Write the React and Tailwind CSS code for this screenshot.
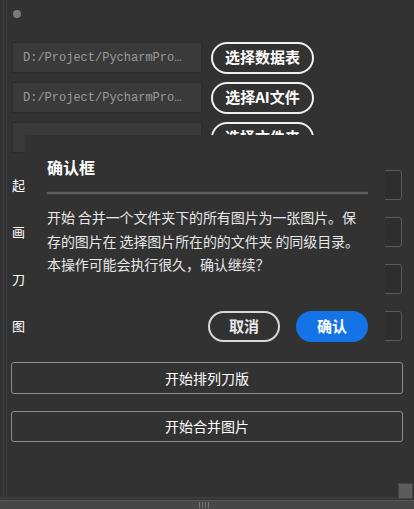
import React from "react";

const cjk = { fontFamily: '"Microsoft YaHei","Noto Sans CJK SC","Noto Sans",sans-serif' };
const mono = { fontFamily: '"Liberation Mono","DejaVu Sans Mono",monospace' };

function PathRow({ text, btn }) {
  return (
    <div className="flex items-center h-[31px] gap-[9px]">
      <div
        className="w-[190px] h-[31px] bg-[#3a3a3a] border border-[#2c2c2c] flex items-center pl-[10px] text-[12px] text-[#9a9a9a] overflow-hidden whitespace-nowrap"
        style={mono}
      >
        {text}
      </div>
      <div
        className="w-[103px] h-[32px] rounded-full border-2 border-[#f0f0f0] flex items-center justify-center text-[15px] font-bold text-white"
        style={cjk}
      >
        {btn}
      </div>
    </div>
  );
}

function LabelRow({ label }) {
  return (
    <div className="flex items-center h-[30px]">
      <div className="w-[28px] text-[13px] text-white" style={cjk}>{label}</div>
      <div className="flex-1 h-[30px] bg-[#2e2e2e] border border-[#5a5a5a] rounded-[3px] mr-[1px]" />
    </div>
  );
}

export default function App() {
  return (
    <div className="relative w-[414px] h-[509px] bg-[#323232] overflow-hidden" style={cjk}>
      <div className="absolute left-[3px] top-0 bottom-[10px] w-[1px] bg-[#3e3e3e]" />
      <div className="absolute left-[6px] top-0 bottom-[10px] w-[1px] bg-[#3a3a3a]" />
      <div className="pl-[12px] pr-[11px]">
        <div className="h-[42px] pt-[10px] pl-[1px]">
          <div className="w-[8px] h-[8px] rounded-full bg-[#7a7a7a] ml-[0px]" />
        </div>
        <div className="flex flex-col gap-[9px]">
          <PathRow text="D:/Project/PycharmPro…" btn="选择数据表" />
          <PathRow text="D:/Project/PycharmPro…" btn="选择AI文件" />
          <PathRow text="" btn="选择文件夹" />
        </div>
        <div className="flex flex-col gap-[17px] mt-[17px]">
          <LabelRow label="起" />
          <LabelRow label="画" />
          <LabelRow label="刀" />
          <LabelRow label="图" />
        </div>
        <div className="flex flex-col gap-[17px] mt-[21px] -ml-[1px]">
          <div className="h-[32px] border border-[#8c8c8c] rounded-[3px] flex items-center justify-center text-[14px] text-white">
            开始排列刀版
          </div>
          <div className="h-[31px] border border-[#8c8c8c] rounded-[3px] flex items-center justify-center text-[14px] text-white">
            开始合并图片
          </div>
        </div>
      </div>

      <div className="absolute left-0 right-[16px] bottom-[10px] h-[2px] bg-[#3c3c3c]" />
      <div className="absolute left-0 right-0 bottom-0 h-[9px] bg-[#474747] border-t border-[#5a5a5a] flex justify-center">
        <div className="w-[16px] h-[8px] mr-[0px] flex gap-[2px] items-center">
          <div className="w-[1px] h-[6px] bg-[#777]" />
          <div className="w-[1px] h-[6px] bg-[#777]" />
          <div className="w-[1px] h-[6px] bg-[#777]" />
          <div className="w-[1px] h-[6px] bg-[#777]" />
        </div>
      </div>
      <div className="absolute right-[1px] bottom-[10px] w-[15px] h-[16px] bg-[#5c5c5c] border border-[#444]" />

      {/* dialog */}
      <div className="absolute left-[25px] top-[135px] w-[360px] h-[223px] bg-[#323232] pl-[22px] pr-[17px] pt-[20px]">
        <div className="text-[16px] font-bold text-white leading-[24px]">确认框</div>
        <div className="mt-[11px] h-[6px] flex flex-col justify-center">
          <div className="h-[1px] bg-[#3c3c3c]" />
          <div className="h-[2px] bg-[#5e5e5e]" />
          <div className="h-[1px] bg-[#3c3c3c]" />
        </div>
        <div className="mt-[10px] text-[14px] leading-[23.5px] text-[#e8e8e8] tracking-[-0.1px]">
          开始&nbsp;合并一个文件夹下的所有图片为一张图片。保存的图片在&nbsp;选择图片所在的的文件夹&nbsp;的同级目录。本操作可能会执行很久，确认继续？
        </div>
        <div className="flex justify-end gap-[16px] mt-[34px]">
          <div className="w-[72px] h-[31px] rounded-full border-2 border-[#d8d8d8] flex items-center justify-center text-[15px] font-bold text-[#e8e8e8]">
            取消
          </div>
          <div className="w-[72px] h-[31px] rounded-full bg-[#1473e6] flex items-center justify-center text-[15px] font-bold text-white">
            确认
          </div>
        </div>
      </div>
    </div>
  );
}
